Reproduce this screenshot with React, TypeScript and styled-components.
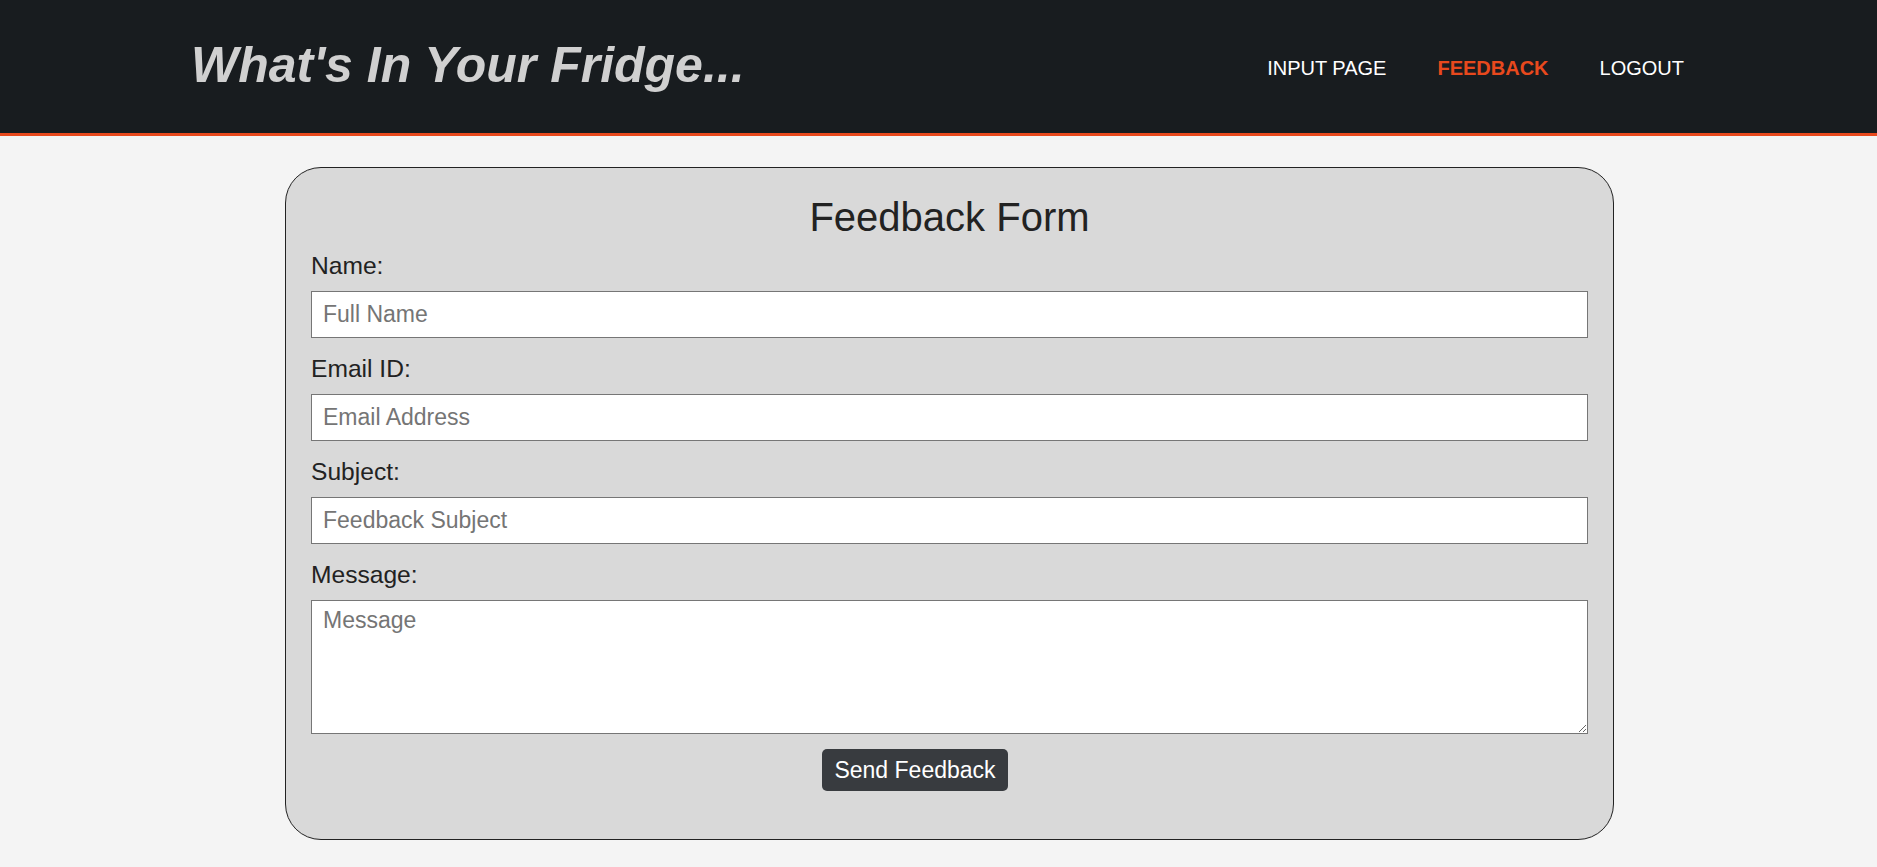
import React from "react";
import styled, { createGlobalStyle } from "styled-components";

const GlobalStyle = createGlobalStyle`
  html, body {
    margin: 0;
    padding: 0;
    background: #f4f4f4;
    font-family: "Liberation Sans", Arial, sans-serif;
  }
  * { box-sizing: border-box; }
`;

const Header = styled.header`
  height: 136px;
  background: #181c1f;
  border-bottom: 3px solid #e8491d;
  display: flex;
  align-items: center;
  justify-content: space-between;
  padding: 0 193px 0 191px;
`;

const Brand = styled.h1`
  margin: 0 0 4px 0;
  font-size: 50px;
  font-weight: bold;
  font-style: italic;
  color: #d0d0d0;
  line-height: 56px;
`;

const Nav = styled.nav`
  display: flex;
  align-items: center;
  gap: 51px;
  margin-top: 3px;
`;

const NavLink = styled.a<{ $active?: boolean }>`
  font-size: 20px;
  text-transform: uppercase;
  text-decoration: none;
  color: ${(p) => (p.$active ? "#e8491d" : "#ffffff")};
  font-weight: ${(p) => (p.$active ? "bold" : "normal")};
  cursor: pointer;
`;

const Card = styled.form`
  width: 1329px;
  margin: 31px 0 0 285px;
  background: #d9d9d9;
  border: 1px solid #222;
  border-radius: 36px;
  padding: 26px 25px 48px;
  display: flex;
  flex-direction: column;
`;

const Title = styled.h2`
  margin: 0 0 12px 0;
  font-size: 40px;
  font-weight: normal;
  line-height: 46px;
  text-align: center;
  color: #222;
`;

const Label = styled.label`
  font-size: 24.6px;
  line-height: 28px;
  color: #222;
  margin-bottom: 11px;
`;

const Input = styled.input`
  height: 47px;
  width: 100%;
  border: 1px solid #767676;
  background: #fff;
  font-family: "Liberation Sans", Arial, sans-serif;
  font-size: 23px;
  padding: 0 11px;
  margin-bottom: 17px;
  outline: none;
  &::placeholder { color: #757575; }
`;

const TextArea = styled.textarea`
  height: 134px;
  width: 100%;
  border: 1px solid #767676;
  background: #fff;
  font-family: "Liberation Sans", Arial, sans-serif;
  font-size: 23px;
  padding: 6px 11px;
  outline: none;
  display: block;
  &::placeholder { color: #757575; }
`;

const ButtonRow = styled.div`
  display: flex;
  justify-content: center;
  padding-right: 69px;
  margin-top: 15px;
`;

const SendButton = styled.button`
  height: 42px;
  padding: 0 12px;
  background: #383b3f;
  color: #fff;
  border: none;
  border-radius: 5px;
  font-family: "Liberation Sans", Arial, sans-serif;
  font-size: 23px;
  cursor: pointer;
`;

export default function App() {
  return (
    <>
      <GlobalStyle />
      <Header>
        <Brand>What's In Your Fridge...</Brand>
        <Nav>
          <NavLink>Input Page</NavLink>
          <NavLink $active>Feedback</NavLink>
          <NavLink>Logout</NavLink>
        </Nav>
      </Header>
      <Card onSubmit={(e) => e.preventDefault()}>
        <Title>Feedback Form</Title>
        <Label htmlFor="name">Name:</Label>
        <Input id="name" placeholder="Full Name" />
        <Label htmlFor="email">Email ID:</Label>
        <Input id="email" placeholder="Email Address" />
        <Label htmlFor="subject">Subject:</Label>
        <Input id="subject" placeholder="Feedback Subject" />
        <Label htmlFor="message">Message:</Label>
        <TextArea id="message" placeholder="Message" />
        <ButtonRow>
          <SendButton type="submit">Send Feedback</SendButton>
        </ButtonRow>
      </Card>
    </>
  );
}
